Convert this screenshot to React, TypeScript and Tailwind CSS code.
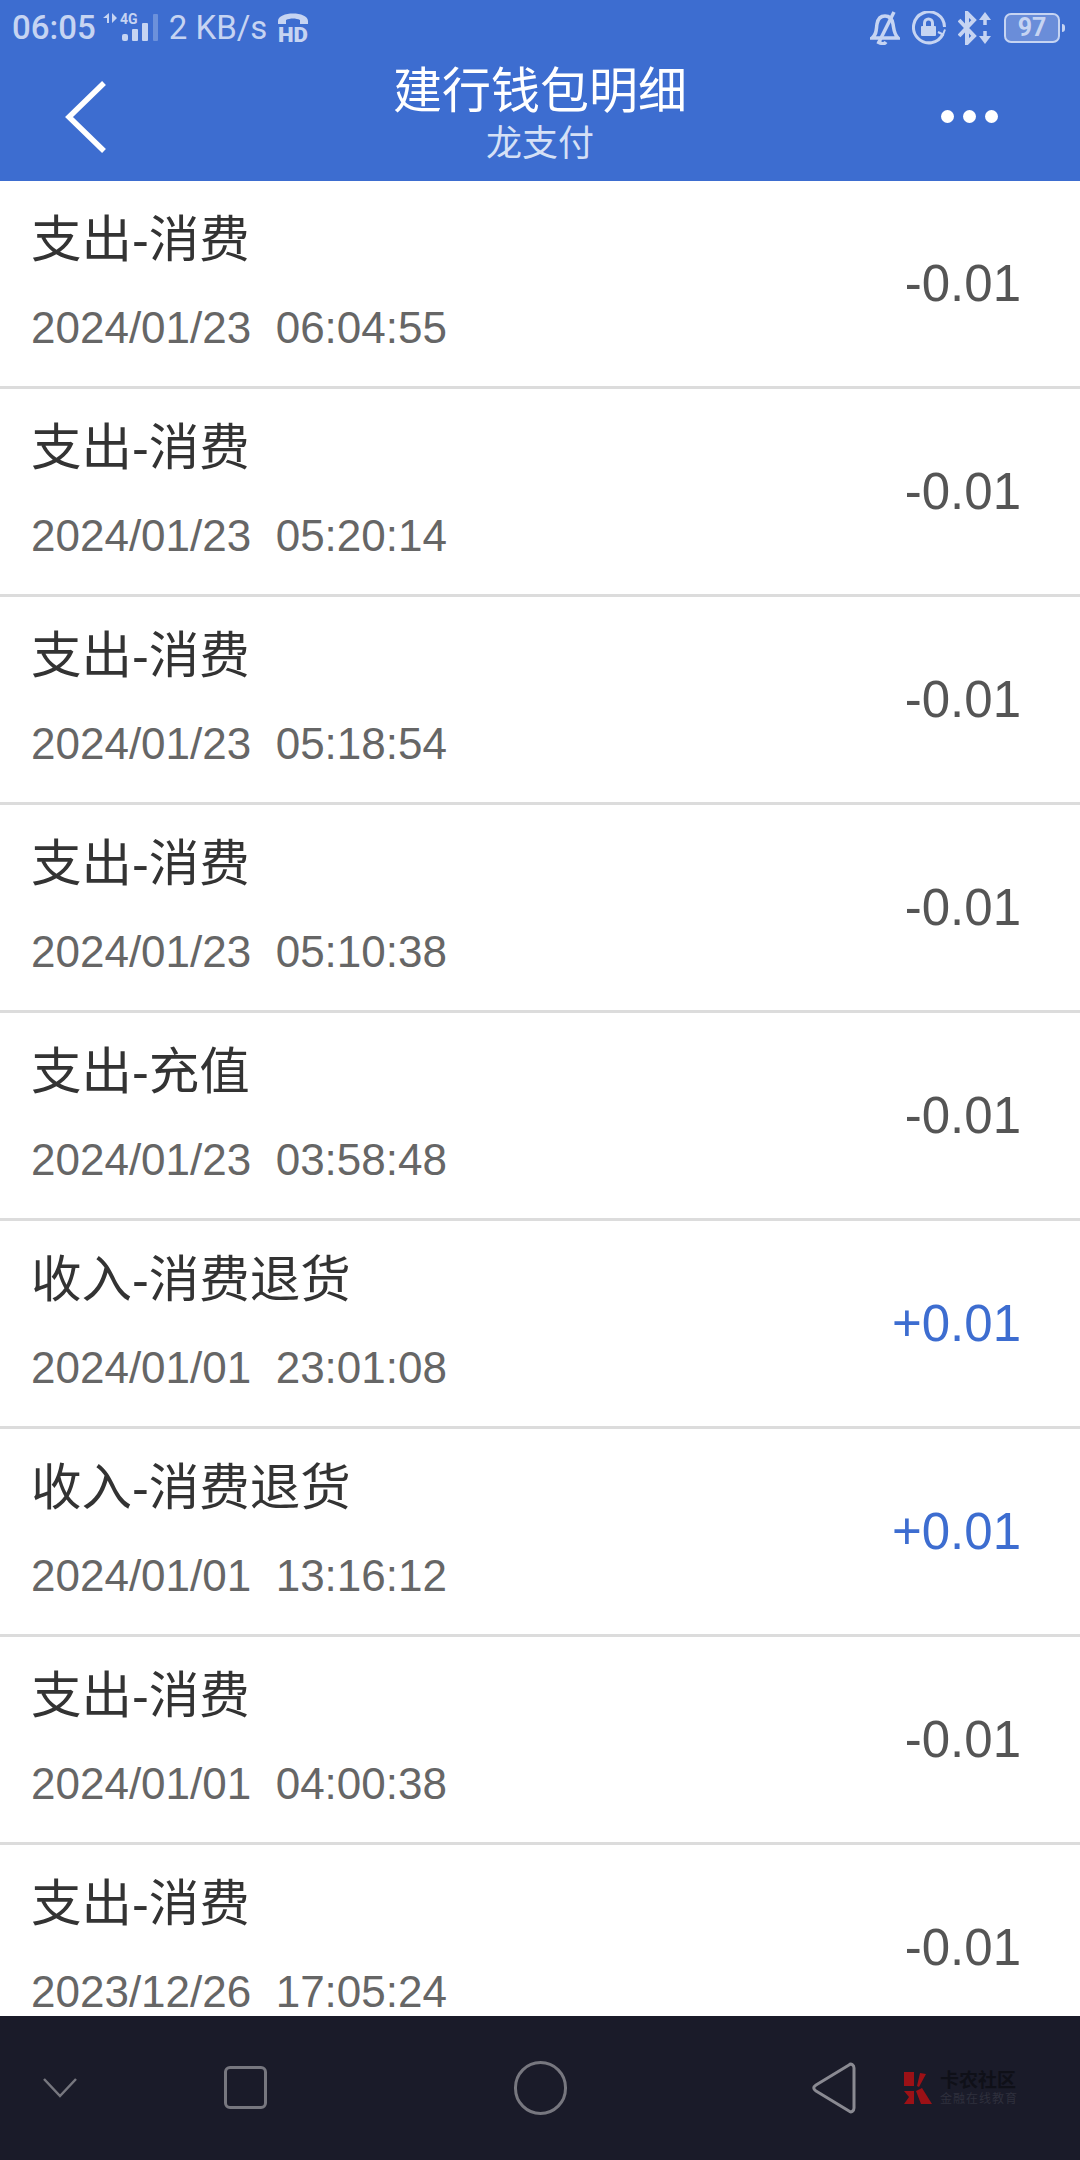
import React from 'react';

const rows = [
  { title: '支出-消费', time: '2024/01/23  06:04:55', amount: '-0.01' },
  { title: '支出-消费', time: '2024/01/23  05:20:14', amount: '-0.01' },
  { title: '支出-消费', time: '2024/01/23  05:18:54', amount: '-0.01' },
  { title: '支出-消费', time: '2024/01/23  05:10:38', amount: '-0.01' },
  { title: '支出-充值', time: '2024/01/23  03:58:48', amount: '-0.01' },
  { title: '收入-消费退货', time: '2024/01/01  23:01:08', amount: '+0.01' },
  { title: '收入-消费退货', time: '2024/01/01  13:16:12', amount: '+0.01' },
  { title: '支出-消费', time: '2024/01/01  04:00:38', amount: '-0.01' },
  { title: '支出-消费', time: '2023/12/26  17:05:24', amount: '-0.01' },
];

const StatusLeft = () => (
  <div className="flex items-center font-['Roboto',sans-serif] text-[#c6d4f2]">
    <span className="text-[33px] leading-none font-medium">06:05</span>
    <svg width="55" height="36" viewBox="0 0 55 36" className="ml-[7px]" fill="currentColor">
      <path d="M6 3v10H4V8L0 8zM9 3l5 5-5 5z" />
      <text x="17" y="14" fontSize="14" fontWeight="700" fontFamily="Roboto, sans-serif">4G</text>
      <rect x="19" y="24" width="6" height="7" rx="2" />
      <rect x="29" y="19" width="6" height="12" rx="1" />
      <rect x="39" y="13" width="6" height="18" rx="1" />
      <rect x="50" y="4" width="5" height="27" rx="1" opacity="0.35" />
    </svg>
    <span className="ml-[11px] text-[33px] leading-none">2 KB/s</span>
    <svg width="32" height="38" viewBox="0 0 32 38" className="ml-[10px]" fill="currentColor">
      <path d="M1 12C1 2 31 2 31 12v3h-8v-4c-4-2-10-2-14 0v4H1z" />
      <text x="1" y="33" fontSize="20" fontWeight="900" fontFamily="Roboto, sans-serif" textLength="30" lengthAdjust="spacingAndGlyphs">HD</text>
    </svg>
  </div>
);

const StatusRight = () => (
  <div className="flex items-center text-[#c6d4f2]">
    <svg width="30" height="34" viewBox="0 0 30 34" fill="none" stroke="currentColor" strokeWidth="3.5">
      <path d="M2 27c5-4 4-8 5-14 1-6 4-8 8-8s7 2 8 8c1 6 1 10 5 14z" />
      <path d="M24 1L8 33" />
      <path d="M9 30a4 4 0 0 0 7 1" />
    </svg>
    <svg width="34" height="34" viewBox="0 0 34 34" className="ml-[12px]" fill="none" stroke="currentColor" strokeWidth="3">
      <path d="M31 23A15.5 15.5 0 1 1 32.5 16" />
      <path d="M26 21l5 2.500 2-5" strokeWidth="2" />
      <rect x="9" y="15" width="15" height="10" rx="1" fill="currentColor" stroke="none" />
      <path d="M12.500 15v-3a4 4 0 0 1 8 0v3" />
    </svg>
    <svg width="34" height="34" viewBox="0 0 34 34" className="ml-[12px]" fill="none" stroke="currentColor" strokeWidth="4">
      <path d="M1 9l15 16-7 7V2l7 7L1 25" />
      <path d="M27 4v10M27 20v10" strokeWidth="3.500" />
      <path d="M21 9l6-8 6 8zM21 25l6 8 6-8z" fill="currentColor" stroke="none" />
    </svg>
    <div className="ml-[12px] flex items-center">
      <div className="flex h-[30px] w-[56px] items-center justify-center rounded-[7px] border-2 border-[#c6d4f2] bg-[#6a8dd9] font-['Roboto',sans-serif] text-[25px] leading-none font-bold">
        97
      </div>
      <div className="ml-[2px] h-[8px] w-[3px] rounded-r-sm bg-[#c6d4f2]" />
    </div>
  </div>
);

const Header = () => (
  <header className="h-[181px] shrink-0 bg-[#3d6dd0]">
    <div className="flex h-[54px] items-center justify-between pt-[1px] pr-[15px] pl-[12px]">
      <StatusLeft />
      <StatusRight />
    </div>
    <div className="grid h-[127px] grid-cols-[1fr_auto_1fr] items-start">
      <div className="pl-[64px]">
        <svg width="44" height="74" viewBox="0 0 44 74" className="mt-[26px]" fill="none" stroke="#fff" strokeWidth="5.500">
          <path d="M40 3L5 37l35 34" />
        </svg>
      </div>
      <div className="flex flex-col items-center pt-[10px]">
        <div className="text-[49px] leading-[54px] text-white">建行钱包明细</div>
        <div className="mt-[6px] text-[36px] leading-[40px] text-[#d5e0f6]">龙支付</div>
      </div>
      <div className="flex justify-end gap-[9px] pt-[56px] pr-[82px]">
        <div className="h-[13px] w-[13px] rounded-full bg-white" />
        <div className="h-[13px] w-[13px] rounded-full bg-white" />
        <div className="h-[13px] w-[13px] rounded-full bg-white" />
      </div>
    </div>
  </header>
);

const Row = ({ title, time, amount }: { title: string; time: string; amount: string }) => (
  <div className="flex h-[208px] shrink-0 items-center justify-between border-b-[3px] border-[#dcdcdc] pr-[59px] pl-[31px]">
    <div className="pb-[8px]">
      <div className="pt-[2px] text-[50.500px] leading-[58px] text-[#333]">{title}</div>
      <div className="mt-[37px] text-[44px] leading-[44px] whitespace-pre text-[#666]">{time}</div>
    </div>
    <div className={amount.startsWith('+') ? 'text-[51px] leading-none text-[#3d6dd0]' : 'text-[51px] leading-none text-[#555]'}>
      {amount}
    </div>
  </div>
);

const BottomNav = () => (
  <nav className="flex h-[144px] shrink-0 items-center bg-[#1a1b29] pb-[1px] text-[#77777f]">
    <svg width="34" height="20" viewBox="0 0 34 20" className="ml-[43px]" fill="none" stroke="currentColor" strokeWidth="2.500">
      <path d="M1 1l16 17L33 1" />
    </svg>
    <div className="ml-[147px] h-[43px] w-[43px] rounded-[6px] border-[3px] border-[#77777f]" />
    <div className="ml-[247px] h-[54px] w-[53px] rounded-full border-[3px] border-[#77777f]" />
    <svg width="44" height="52" viewBox="0 0 44 52" className="ml-[245px]" fill="none" stroke="#8a8a92" strokeWidth="3" strokeLinejoin="round">
      <path d="M42 6c0-3-3-5-5-3L4 23c-3 2-3 4 0 6l33 20c2 2 5 0 5-3z" />
    </svg>
    <div className="ml-[47px] flex items-center">
      <svg width="30" height="34" viewBox="0 0 30 34" fill="#9c1116">
        <path d="M1 1h10v14H1zM14 15l3-13 6 1-7 13zM1 20h10v13H1l5-7zM13 20l6-3 10 16H18z" />
      </svg>
      <div className="ml-[7px] flex flex-col text-[#0f1018]">
        <span className="text-[19px] leading-[21px] font-bold">卡农社区</span>
        <span className="mt-[1px] text-[12px] leading-[14px] tracking-[1px] text-[#2f303d]">金融在线教育</span>
      </div>
    </div>
  </nav>
);

export default function App() {
  return (
    <div className="flex h-[2160px] w-[1080px] flex-col overflow-hidden bg-white font-['Liberation_Sans','Noto_Sans_CJK_SC',sans-serif]">
      <Header />
      <main className="flex min-h-0 flex-1 flex-col overflow-hidden">
        {rows.map((row, i) => (
          <Row key={i} title={row.title} time={row.time} amount={row.amount} />
        ))}
      </main>
      <BottomNav />
    </div>
  );
}
